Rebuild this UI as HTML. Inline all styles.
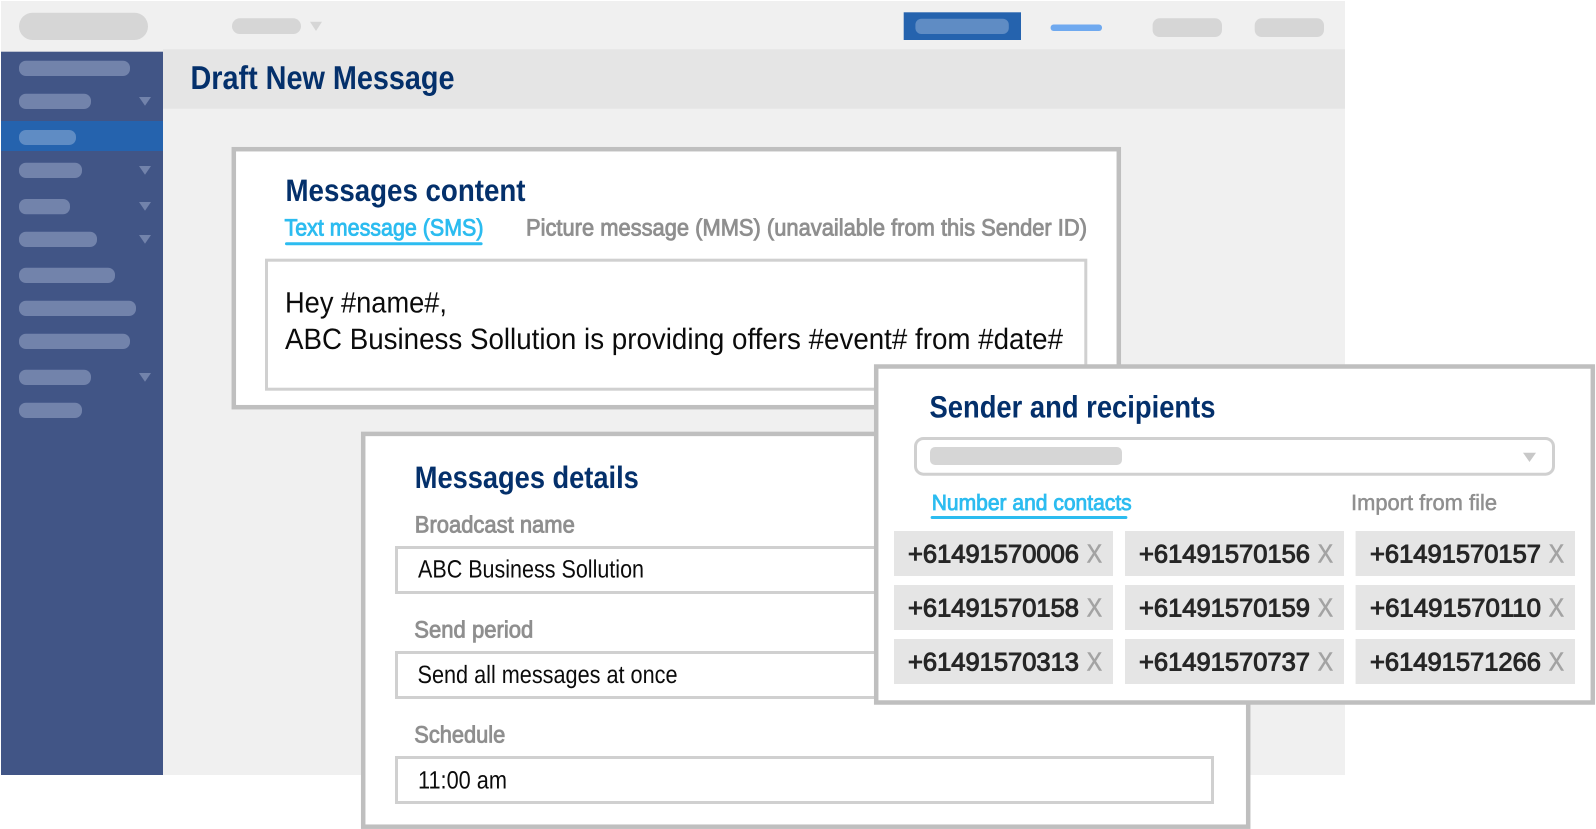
<!DOCTYPE html>
<html lang="en">
<head>
<meta charset="utf-8">
<title>Draft New Message</title>
<style>
html,body{margin:0;padding:0;background:#fff;width:1596px;height:829px;overflow:hidden}
svg{display:block}
text{font-family:"Liberation Sans",Arial,sans-serif;text-rendering:geometricPrecision}
.t{font-weight:700;fill:#04306b;font-size:31px}
.lab{fill:#8f8f8f;font-size:23.5px;stroke:#8f8f8f;stroke-width:.85px}
.blue{fill:#2cbcf0;stroke:#2cbcf0}
.body{fill:#0b0b0b;font-size:29.5px}
.val{fill:#0b0b0b;font-size:25px}
.num{fill:#262626;font-size:25.5px;stroke:#262626;stroke-width:1px}
.x{fill:#a3a3a3;font-size:26px;stroke:#a3a3a3;stroke-width:.6px}
</style>
</head>
<body>
<svg width="1596" height="829" viewBox="0 0 1596 829" xmlns="http://www.w3.org/2000/svg">
<rect x="1" y="1" width="1344" height="774" fill="#f0f0f0"/>
<rect x="163" y="49.3" width="1182" height="59.4" fill="#e5e5e5"/>
<rect x="1" y="51.7" width="162" height="723.3" fill="#415586"/>
<rect x="19" y="12.7" width="129" height="27.3" rx="13.6" fill="#d6d6d6"/>
<rect x="232" y="18.3" width="69" height="15.7" rx="7.8" fill="#d6d6d6"/>
<path d="M310 21.7H322L316 31Z" fill="#d6d6d6"/>
<rect x="903.7" y="12.300" width="117.3" height="27.7" fill="#2563ae"/>
<rect x="915.4" y="18.7" width="93.4" height="15.3" rx="6" fill="#5f8cc4"/>
<rect x="1050.6" y="24.5" width="51.4" height="6.5" rx="3" fill="#6fa9ef"/>
<rect x="1152.6" y="18.3" width="69.4" height="18.7" rx="7" fill="#d6d6d6"/>
<rect x="1254.7" y="18.3" width="69.3" height="18.7" rx="7" fill="#d6d6d6"/>
<g fill="#7283ab">
<rect x="19" y="60.7" width="111" height="15.3" rx="7"/>
<rect x="19" y="93.7" width="72" height="15.3" rx="7"/>
<rect x="19" y="162.7" width="63" height="15.3" rx="7"/>
<rect x="19" y="199" width="51" height="15.3" rx="7"/>
<rect x="19" y="231.7" width="78" height="15.3" rx="7"/>
<rect x="19" y="267.7" width="96" height="15.3" rx="7"/>
<rect x="19" y="300.7" width="117" height="15.3" rx="7"/>
<rect x="19" y="333.7" width="111" height="15.3" rx="7"/>
<rect x="19" y="369.7" width="72" height="15.3" rx="7"/>
<rect x="19" y="402.7" width="63" height="15.3" rx="7"/>
<path d="M139 97H151L145 105.7Z"/>
<path d="M139 166H151L145 174.7Z"/>
<path d="M139 202H151L145 210.7Z"/>
<path d="M139 235H151L145 243.7Z"/>
<path d="M139 373H151L145 381.7Z"/>
</g>
<rect x="1" y="121" width="162" height="30" fill="#2563ae"/>
<rect x="19" y="130" width="57" height="15" rx="7" fill="#5f8cc4"/>
<text x="190.5" y="89" font-size="33" font-weight="700" fill="#04306b" textLength="264" lengthAdjust="spacingAndGlyphs">Draft New Message</text>

<rect x="233.8" y="149.2" width="885" height="258" fill="#fff" stroke="#bfbfbf" stroke-width="4.5"/>
<text class="t" x="285.5" y="200.8" textLength="240" lengthAdjust="spacingAndGlyphs">Messages content</text>
<text class="lab blue" x="284.5" y="235.3" textLength="199" lengthAdjust="spacingAndGlyphs">Text message (SMS)</text>
<rect x="285" y="242.3" width="197.6" height="3" rx="1.5" fill="#2cbcf0"/>
<text class="lab" x="526" y="235.3" textLength="561" lengthAdjust="spacingAndGlyphs">Picture message (MMS) (unavailable from this Sender ID)</text>
<rect x="266.5" y="260.2" width="819.3" height="129" fill="#fff" stroke="#d0d0d0" stroke-width="3"/>
<text class="body" x="285" y="312.7" textLength="162" lengthAdjust="spacingAndGlyphs">Hey #name#,</text>
<text class="body" x="285" y="349" textLength="778" lengthAdjust="spacingAndGlyphs">ABC Business Sollution is providing offers #event# from #date#</text>

<rect x="363.2" y="433.9" width="885" height="392.8" fill="#fff" stroke="#bfbfbf" stroke-width="4.5"/>
<text class="t" x="414.8" y="488" textLength="224" lengthAdjust="spacingAndGlyphs">Messages details</text>
<text class="lab" x="414.8" y="532.7" textLength="160" lengthAdjust="spacingAndGlyphs">Broadcast name</text>
<rect x="396.5" y="547.5" width="816" height="45" fill="#fff" stroke="#d0d0d0" stroke-width="3"/>
<text class="val" x="418" y="577.6" textLength="226" lengthAdjust="spacingAndGlyphs">ABC Business Sollution</text>
<text class="lab" x="414.3" y="637.3" textLength="119" lengthAdjust="spacingAndGlyphs">Send period</text>
<rect x="396.5" y="652.5" width="816" height="45" fill="#fff" stroke="#d0d0d0" stroke-width="3"/>
<text class="val" x="417.5" y="682.9" textLength="260" lengthAdjust="spacingAndGlyphs">Send all messages at once</text>
<text class="lab" x="414.3" y="742.7" textLength="91" lengthAdjust="spacingAndGlyphs">Schedule</text>
<rect x="396.5" y="757.5" width="816" height="45" fill="#fff" stroke="#d0d0d0" stroke-width="3"/>
<text class="val" x="418" y="788.5" textLength="89" lengthAdjust="spacingAndGlyphs">11:00 am</text>

<rect x="876.2" y="366.5" width="716.6" height="336" fill="#fff" stroke="#bfbfbf" stroke-width="4.5"/>
<text class="t" x="929.5" y="417.6" textLength="286" lengthAdjust="spacingAndGlyphs">Sender and recipients</text>
<rect x="915.5" y="438.5" width="638" height="35.7" rx="8" fill="#fff" stroke="#d0d0d0" stroke-width="3"/>
<rect x="930" y="447" width="192" height="18" rx="5" fill="#d6d6d6"/>
<path d="M1523 452.7H1536L1529.500 462Z" fill="#c8c8c8"/>
<text class="lab blue" x="931.7" y="510" style="font-size:22px" textLength="200" lengthAdjust="spacingAndGlyphs">Number and contacts</text>
<rect x="930.6" y="516" width="196.8" height="3" rx="1.5" fill="#2cbcf0"/>
<text class="lab" x="1351" y="510" style="font-size:22px;stroke-width:.5px" textLength="146" lengthAdjust="spacingAndGlyphs">Import from file</text>

<g fill="#e5e5e5">
<rect x="894" y="531" width="219" height="45"/><rect x="1125" y="531" width="219" height="45"/><rect x="1355.6" y="531" width="219.400" height="45"/>
<rect x="894" y="585" width="219" height="45"/><rect x="1125" y="585" width="219" height="45"/><rect x="1355.6" y="585" width="219.400" height="45"/>
<rect x="894" y="639" width="219" height="45"/><rect x="1125" y="639" width="219" height="45"/><rect x="1355.6" y="639" width="219.400" height="45"/>
</g>
<text class="num" x="908" y="562.6" textLength="171" lengthAdjust="spacingAndGlyphs">+61491570006</text><text class="x" x="1086.7" y="562.6" textLength="15.300" lengthAdjust="spacingAndGlyphs">X</text>
<text class="num" x="1139" y="562.6" textLength="171" lengthAdjust="spacingAndGlyphs">+61491570156</text><text class="x" x="1317.7" y="562.6" textLength="15.300" lengthAdjust="spacingAndGlyphs">X</text>
<text class="num" x="1370" y="562.6" textLength="171" lengthAdjust="spacingAndGlyphs">+61491570157</text><text class="x" x="1548.7" y="562.6" textLength="15.300" lengthAdjust="spacingAndGlyphs">X</text>
<text class="num" x="908" y="616.6" textLength="171" lengthAdjust="spacingAndGlyphs">+61491570158</text><text class="x" x="1086.7" y="616.6" textLength="15.300" lengthAdjust="spacingAndGlyphs">X</text>
<text class="num" x="1139" y="616.6" textLength="171" lengthAdjust="spacingAndGlyphs">+61491570159</text><text class="x" x="1317.7" y="616.6" textLength="15.300" lengthAdjust="spacingAndGlyphs">X</text>
<text class="num" x="1370" y="616.6" textLength="171" lengthAdjust="spacingAndGlyphs">+61491570110</text><text class="x" x="1548.7" y="616.6" textLength="15.300" lengthAdjust="spacingAndGlyphs">X</text>
<text class="num" x="908" y="670.6" textLength="171" lengthAdjust="spacingAndGlyphs">+61491570313</text><text class="x" x="1086.7" y="670.6" textLength="15.300" lengthAdjust="spacingAndGlyphs">X</text>
<text class="num" x="1139" y="670.6" textLength="171" lengthAdjust="spacingAndGlyphs">+61491570737</text><text class="x" x="1317.7" y="670.6" textLength="15.300" lengthAdjust="spacingAndGlyphs">X</text>
<text class="num" x="1370" y="670.6" textLength="171" lengthAdjust="spacingAndGlyphs">+61491571266</text><text class="x" x="1548.7" y="670.6" textLength="15.300" lengthAdjust="spacingAndGlyphs">X</text>
</svg>
</body>
</html>
